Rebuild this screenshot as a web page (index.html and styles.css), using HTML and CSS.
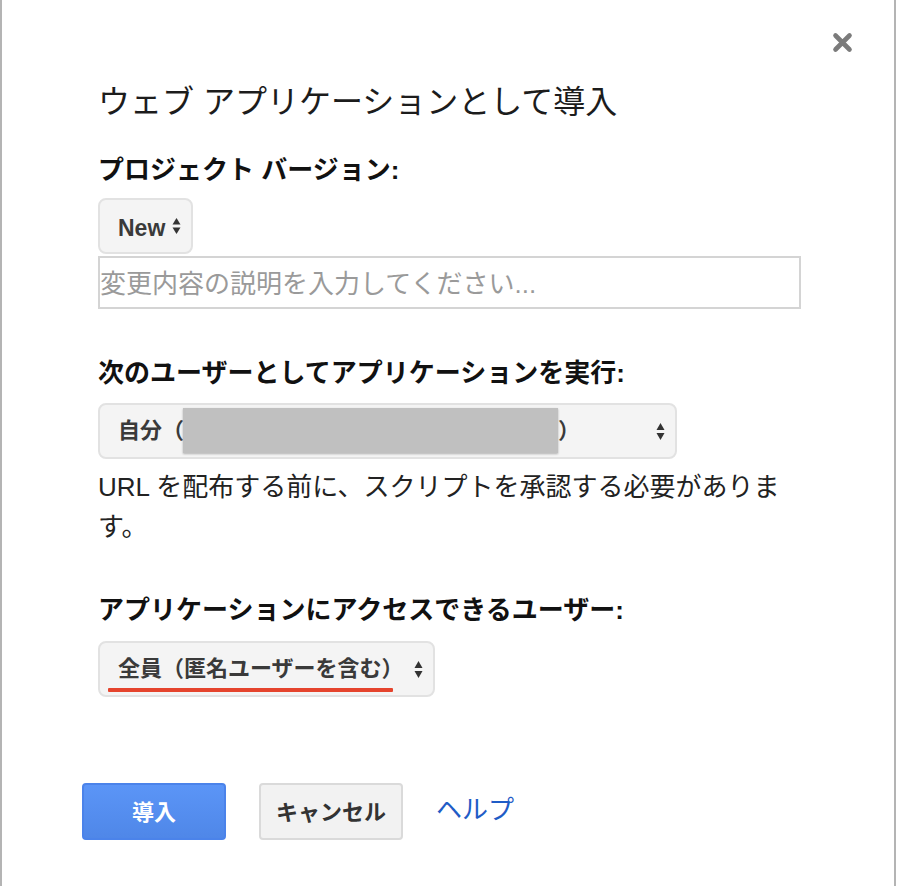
FILE: index.html
```html
<!DOCTYPE html>
<html lang="ja">
<head>
<meta charset="utf-8">
<title>ウェブ アプリケーションとして導入</title>
<link rel="stylesheet" href="styles.css">
</head>
<body>
<div class="dialog">
  <button class="close" aria-label="閉じる">
    <svg width="21" height="21" viewBox="0 0 21 21"><path d="M3.5 3.5 L17.5 17.5 M17.5 3.5 L3.5 17.5" stroke="#7b7b7b" stroke-width="4.6" stroke-linecap="round" fill="none"/></svg>
  </button>
  <div class="content">
    <h1 class="title">ウェブ アプリケーションとして導入</h1>

    <div class="label label-first">プロジェクト バージョン:</div>
    <div class="select select-new">
      <span class="sel-text">New</span>
      <svg class="arrows" width="9" height="16" viewBox="0 0 9 16"><polygon points="0.5,6.5 4.5,0 8.5,6.5" fill="#333"/><polygon points="0.5,9.5 8.5,9.5 4.5,16" fill="#333"/></svg>
    </div>
    <div class="textarea"><span class="placeholder">変更内容の説明を入力してください...</span></div>

    <div class="label label-run">次のユーザーとしてアプリケーションを実行:</div>
    <div class="select select-run">
      <span class="sel-text">自分（<span class="redact"></span>）</span>
      <svg class="arrows" width="9" height="17" viewBox="0 0 9 17"><polygon points="0.5,7 4.5,0 8.5,7" fill="#333"/><polygon points="0.5,10 8.5,10 4.5,17" fill="#333"/></svg>
    </div>
    <p class="note">URL を配布する前に、スクリプトを承認する必要があります。</p>

    <div class="label label-access">アプリケーションにアクセスできるユーザー:</div>
    <div class="select select-access">
      <span class="sel-text">全員（匿名ユーザーを含む）</span>
      <svg class="arrows" width="9" height="17" viewBox="0 0 9 17"><polygon points="0.5,7 4.5,0 8.5,7" fill="#333"/><polygon points="0.5,10 8.5,10 4.5,17" fill="#333"/></svg>
      <span class="mark"></span>
    </div>

    <div class="actions">
      <button class="btn btn-primary">導入</button>
      <button class="btn btn-default">キャンセル</button>
      <a class="help" href="#">ヘルプ</a>
    </div>
  </div>
</div>
</body>
</html>
```

FILE: styles.css
```css
html, body {
  margin: 0;
  padding: 0;
  background: #ffffff;
}

body {
  font-family: "Liberation Sans", "Noto Sans CJK JP", sans-serif;
  color: #222;
}

.dialog {
  position: relative;
  width: 896px;
  height: 886px;
  box-sizing: border-box;
  border-left: 2px solid #b4b4b4;
  border-right: 2px solid #b4b4b4;
  background: #fff;
}

.close {
  position: absolute;
  top: 32px;
  left: 830px;
  width: 21px;
  height: 21px;
  padding: 0;
  border: 0;
  background: transparent;
  display: block;
}

.close svg {
  display: block;
  filter: blur(0.4px);
}

.content {
  padding: 82px 0 0 96px;
  width: 703px;
}

.title {
  margin: 0;
  font-size: 32px;
  line-height: 40px;
  font-weight: normal;
  color: #1c1c1c;
}

.label {
  font-size: 26px;
  line-height: 32px;
  font-weight: bold;
  color: #111;
}

.label-first { margin-top: 32px; }
.label-run { margin-top: 48px; }
.label-access { margin-top: 47px; }

.select {
  position: relative;
  display: flex;
  align-items: center;
  justify-content: space-between;
  box-sizing: border-box;
  height: 56px;
  border: 2px solid #e2e2e2;
  border-radius: 8px;
  background: #f4f4f4;
  padding: 0 10px 0 18px;
  font-size: 22px;
  font-weight: bold;
  color: #3a3a3a;
}

.sel-text {
  display: flex;
  align-items: center;
  white-space: nowrap;
  line-height: 28px;
}

.arrows {
  display: block;
  flex: none;
}

.select-new {
  margin-top: 12px;
  width: 95px;
  padding-right: 10px;
}

.select-new .sel-text {
  font-size: 23px;
  margin-top: 3px;
}

.select-run {
  margin-top: 14px;
  width: 579px;
}

.select-access {
  margin-top: 15px;
  width: 337px;
}

.redact {
  display: inline-block;
  width: 375px;
  height: 45px;
  margin-left: -1px;
  margin-top: -2px;
  background: #c0c0c0;
  box-shadow: 0 1px 2px rgba(0, 0, 0, 0.28);
}

.mark {
  position: absolute;
  left: 8px;
  top: 45px;
  width: 285px;
  height: 4px;
  background: #e5442d;
  border-radius: 1px;
}

.textarea {
  margin-top: 2px;
  box-sizing: border-box;
  height: 53px;
  border: 2px solid #d4d4d4;
  display: flex;
  align-items: center;
  padding: 0 0 0 0;
}

.placeholder {
  font-size: 26px;
  line-height: 32px;
  color: #9a9a9a;
  white-space: nowrap;
  margin-top: 2px;
}

.note {
  margin: 8px 0 0 0;
  font-size: 26px;
  line-height: 40px;
  color: #222;
}

.actions {
  margin-top: 86px;
  margin-left: -16px;
  display: flex;
  align-items: center;
  gap: 33px;
}

.btn {
  box-sizing: border-box;
  width: 144px;
  height: 57px;
  border-radius: 4px;
  font-family: "Liberation Sans", "Noto Sans CJK JP", sans-serif;
  font-size: 22px;
  font-weight: bold;
  padding: 0 0 4px 0;
  margin: 0;
}

.btn-primary {
  background: linear-gradient(#5b95f7, #4f87e8);
  border: 2px solid #4b83ea;
  color: #ffffff;
}

.btn-default {
  background: #f2f2f2;
  border: 2px solid #dadada;
  color: #333;
}

.help {
  font-size: 26px;
  line-height: 32px;
  color: #1f5cc6;
  text-decoration: none;
  margin-top: -4px;
}
```
